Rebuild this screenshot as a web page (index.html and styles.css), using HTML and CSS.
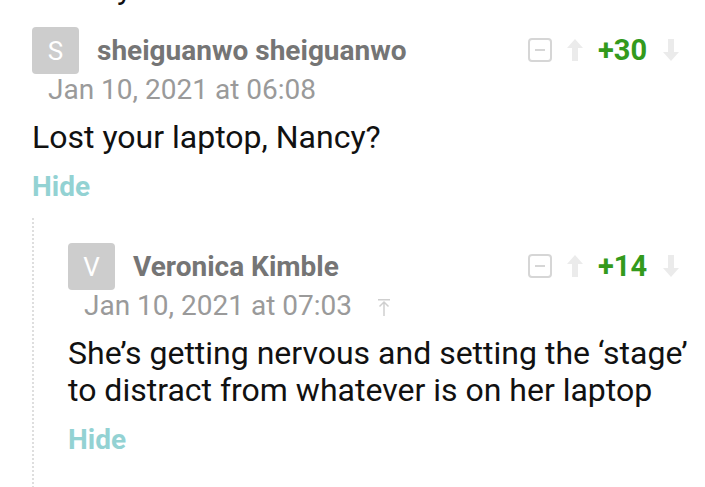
FILE: index.html
```html
<!DOCTYPE html>
<html>
<head>
<meta charset="utf-8">
<link rel="stylesheet" href="styles.css">
</head>
<body>
<div class="page">
  <div class="prev-tail">y</div>
  <div class="comment">
    <div class="head">
      <div class="avatar">S</div>
      <div class="name">sheiguanwo sheiguanwo</div>
      <div class="votes">
        <svg class="collapse" width="24" height="24" viewBox="0 0 24 24"><rect x="1" y="1" width="22" height="22" rx="3" fill="none" stroke="#d6d6d6" stroke-width="2"/><rect x="7" y="11" width="10" height="2" fill="#d6d6d6"/></svg>
        <svg class="arrow" width="18" height="24" viewBox="0 0 18 24"><path d="M9 1 L17 10 L12 10 L12 23 L6 23 L6 10 L1 10 Z" fill="#ebebeb"/></svg>
        <span class="score">+30</span>
        <svg class="arrow" width="18" height="24" viewBox="0 0 18 24"><path d="M9 23 L17 14 L12 14 L12 1 L6 1 L6 14 L1 14 Z" fill="#ebebeb"/></svg>
      </div>
    </div>
    <div class="date">Jan 10, 2021 at 06:08</div>
    <p class="text">Lost your laptop, Nancy?</p>
    <div class="hide">Hide</div>
    <div class="replies">
      <div class="comment">
        <div class="head">
          <div class="avatar">V</div>
          <div class="name">Veronica Kimble</div>
          <div class="votes">
            <svg class="collapse" width="24" height="24" viewBox="0 0 24 24"><rect x="1" y="1" width="22" height="22" rx="3" fill="none" stroke="#d6d6d6" stroke-width="2"/><rect x="7" y="11" width="10" height="2" fill="#d6d6d6"/></svg>
            <svg class="arrow" width="18" height="24" viewBox="0 0 18 24"><path d="M9 1 L17 10 L12 10 L12 23 L6 23 L6 10 L1 10 Z" fill="#ebebeb"/></svg>
            <span class="score">+14</span>
            <svg class="arrow" width="18" height="24" viewBox="0 0 18 24"><path d="M9 23 L17 14 L12 14 L12 1 L6 1 L6 14 L1 14 Z" fill="#ebebeb"/></svg>
          </div>
        </div>
        <div class="date">Jan 10, 2021 at 07:03
          <svg class="parent" width="12" height="18" viewBox="0 0 12 18"><rect x="0" y="1" width="12" height="1.5" fill="#cfcfcf"/><path d="M6 4 L6 18 M1.5 8.5 L6 4 L10.5 8.5" fill="none" stroke="#cfcfcf" stroke-width="1.5"/></svg>
        </div>
        <p class="text">She’s getting nervous and setting the ‘stage’ to distract from whatever is on her laptop</p>
        <div class="hide">Hide</div>
      </div>
    </div>
  </div>
</div>
</body>
</html>
```
FILE: styles.css
```css
html, body {
  margin: 0;
  padding: 0;
  background: #fff;
}
body {
  font-family: Roboto, "Noto Sans", sans-serif;
  width: 705px;
  height: 487px;
  overflow: hidden;
}
.page {
  position: relative;
  padding: 0 0 0 32px;
}
.prev-tail {
  position: absolute;
  left: 117px;
  top: -30px;
  font-size: 32px;
  line-height: 37px;
  color: #111;
}
.comment {
  padding-top: 27px;
}
.head {
  display: flex;
  align-items: center;
  height: 47px;
}
.avatar {
  width: 47px;
  height: 47px;
  border-radius: 4px;
  background: #cdcdcd;
  color: #fff;
  font-size: 26px;
  display: flex;
  align-items: center;
  justify-content: center;
  flex: none;
}
.name {
  margin-left: 18px;
  font-size: 28px;
  line-height: 30px;
  font-weight: 700;
  color: #757575;
  flex: 1;
}
.votes {
  display: flex;
  align-items: center;
  gap: 14px;
  padding-right: 25px;
  margin-top: -2px;
}
.score {
  color: #339a1c;
  font-weight: 700;
  font-size: 29px;
  min-width: 50px;
}
.date {
  margin: 1px 0 0 16px;
  font-size: 28px;
  line-height: 30px;
  color: #9a9a9a;
  display: flex;
  align-items: center;
  gap: 26px;
}
.parent {
  margin-top: 2px;
}
.text {
  margin: 14px 0 0;
  font-size: 32px;
  line-height: 37px;
  color: #111;
}
.hide {
  margin-top: 16px;
  font-size: 28px;
  line-height: 30px;
  font-weight: 700;
  color: #93d2d3;
}
.replies {
  margin-top: 16px;
  border-left: 2px dotted #dedede;
  padding-left: 34px;
}
.replies .comment {
  padding-top: 25px;
  padding-bottom: 33px;
}
```
